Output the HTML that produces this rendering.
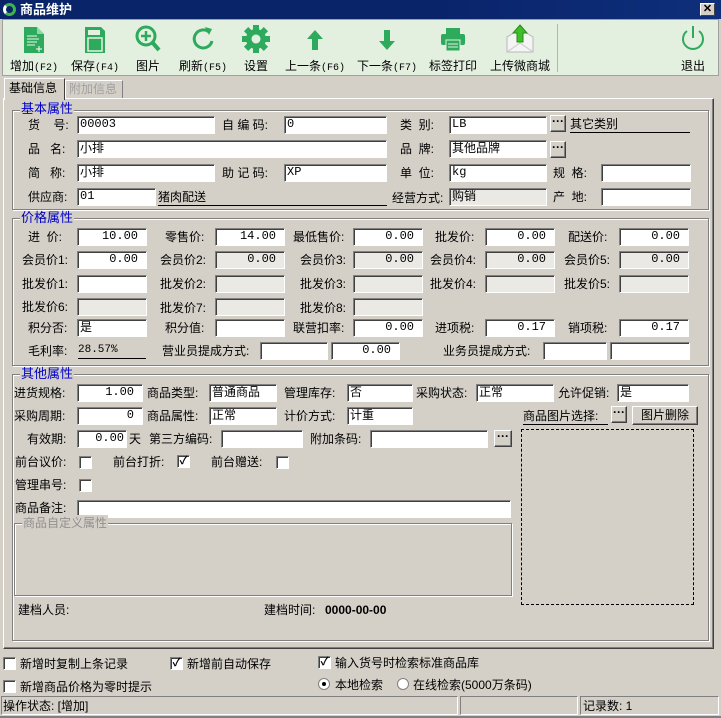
<!DOCTYPE html>
<html><head><meta charset="utf-8">
<style>
*{box-sizing:border-box;margin:0;padding:0}
body{width:721px;height:718px;background:#d4d0c8;font:12px "Liberation Sans","Noto Sans CJK SC",sans-serif;color:#000;position:relative;overflow:hidden}
div,span{position:absolute}
.l{white-space:nowrap;line-height:16px;font-size:12px}
.i{height:18px;background:#fff;border:1px solid;border-color:#808080 #fff #fff #808080;box-shadow:inset 1px 1px #404040;line-height:15px;padding-left:2px;white-space:nowrap;font-size:12px;overflow:hidden}
.g{background:#ebe9e4}
.r{text-align:right;padding-right:8px;font-family:"Liberation Mono",monospace;font-size:12px}
.m{font-family:"Liberation Mono",monospace}
.b{height:17px;width:16px;background:#d4d0c8;border:1px solid;border-color:#fff #404040 #404040 #fff;box-shadow:inset -1px -1px #808080;text-align:center;line-height:11px;font-weight:bold;font-size:12px}
.fr{border:1px solid #808080;box-shadow:1px 1px #fff, inset 1px 1px #fff}
.gt{color:#0000c8;background:#d4d0c8;padding:0 1px;line-height:14px;font-size:13px}
.cb{width:13px;height:13px;background:#fff;border:1px solid;border-color:#808080 #fff #fff #808080;box-shadow:inset 1px 1px #404040;font-size:11px;line-height:10px;text-align:center;font-weight:bold}
.tb{top:23px;text-align:center;font-size:12px;white-space:nowrap}
.tb svg{display:block;margin:0 auto}
.ul{border-bottom:1px solid #000}
</style></head><body>
<div style="left:0;top:0;width:721px;height:19px;background:linear-gradient(90deg,#0a246a,#0a246a 60%,#0e2f7c)"></div>
<div style="left:3px;top:3px;width:13px;height:13px;border-radius:50%;border:3px solid #3bb54a;border-left-color:#fff"></div>
<div class="l" style="left:20px;top:2px;color:#fff;font-weight:bold;font-size:13px">商品维护</div>
<div style="left:700px;top:3px;width:15px;height:13px;background:#d4d0c8;border:1px solid;border-color:#fff #404040 #404040 #fff;font-size:11px;line-height:10px;text-align:center;font-weight:bold">✕</div>
<div style="left:2px;top:19px;width:717px;height:57px;background:#e3f0e0;border:1px solid #a0a0a0"></div>
<div style="left:557px;top:24px;width:1px;height:48px;background:#b0b8b0"></div>
<div class="tb" style="left:8px;width:52px"><svg width="24" height="32" viewBox="0 0 24 32"><path d="M2 4h13l7 7v19H2z" fill="#2eaa5c"/><path d="M15 4v7h7" fill="#8fd6a6"/><path d="M5 13h10M5 16h12M5 19h10M5 22h8" stroke="#e8f8ec" stroke-width="1"/><path d="M14 26h6M17 23v6" stroke="#fff" stroke-width="1"/></svg><span style="position:static;display:block;margin-top:2px">增加<span class="m" style="position:static;font-size:10px">(F2)</span></span></div>
<div class="tb" style="left:66px;width:58px"><svg width="24" height="32" viewBox="0 0 24 32"><path d="M2 4h16l4 4v22H2z" fill="#2eaa5c"/><rect x="5" y="7" width="12" height="5" fill="#e3f0e0"/><rect x="5" y="15" width="14" height="13" fill="none" stroke="#e3f0e0" stroke-width="1.5"/></svg><span style="position:static;display:block;margin-top:2px">保存<span class="m" style="position:static;font-size:10px">(F4)</span></span></div>
<div class="tb" style="left:130px;width:36px"><svg width="28" height="32" viewBox="0 0 28 32"><circle cx="12" cy="13" r="9" fill="none" stroke="#2eaa5c" stroke-width="3"/><path d="M12 8v10M7 13h10" stroke="#2eaa5c" stroke-width="2.5"/><path d="M18 19l7 8" stroke="#2eaa5c" stroke-width="4"/></svg><span style="position:static;display:block;margin-top:2px">图片</span></div>
<div class="tb" style="left:176px;width:54px"><svg width="26" height="32" viewBox="0 0 26 32"><path d="M19 9A9 9 0 1 0 22 18" fill="none" stroke="#2eaa5c" stroke-width="3"/><path d="M15 4l7 2-3 6z" fill="#2eaa5c"/></svg><span style="position:static;display:block;margin-top:2px">刷新<span class="m" style="position:static;font-size:10px">(F5)</span></span></div>
<div class="tb" style="left:238px;width:36px"><svg width="28" height="32" viewBox="0 0 28 32"><g transform="translate(14,16)"><circle r="10" fill="#2eaa5c"/><g fill="#2eaa5c"><rect x="-3" y="-14" width="6" height="28"/><rect x="-3" y="-14" width="6" height="28" transform="rotate(45)"/><rect x="-3" y="-14" width="6" height="28" transform="rotate(90)"/><rect x="-3" y="-14" width="6" height="28" transform="rotate(135)"/></g><circle r="4.5" fill="#e3f0e0"/></g></svg><span style="position:static;display:block;margin-top:2px">设置</span></div>
<div class="tb" style="left:284px;width:62px"><svg width="20" height="32" viewBox="0 0 20 32"><path d="M10 7l8 9h-5v11H7V16H2z" fill="#2eaa5c"/></svg><span style="position:static;display:block;margin-top:2px">上一条<span class="m" style="position:static;font-size:10px">(F6)</span></span></div>
<div class="tb" style="left:356px;width:62px"><svg width="20" height="32" viewBox="0 0 20 32"><path d="M10 27l8-9h-5V7H7v11H2z" fill="#2eaa5c"/></svg><span style="position:static;display:block;margin-top:2px">下一条<span class="m" style="position:static;font-size:10px">(F7)</span></span></div>
<div class="tb" style="left:426px;width:54px"><svg width="28" height="32" viewBox="0 0 28 32"><rect x="7" y="5" width="14" height="6" fill="#2eaa5c"/><rect x="2" y="11" width="24" height="11" rx="2" fill="#2eaa5c"/><rect x="7" y="17" width="14" height="11" fill="#2eaa5c" stroke="#e3f0e0"/><path d="M9 21h10M9 24h10" stroke="#e3f0e0"/></svg><span style="position:static;display:block;margin-top:2px">标签打印</span></div>
<div class="tb" style="left:488px;width:64px"><svg width="30" height="32" viewBox="0 0 30 32"><path d="M2 14l13-8 13 8v15H2z" fill="#f4f4f4" stroke="#b8b8b8"/><path d="M2 29l13-9 13 9" fill="none" stroke="#c8c8c8"/><path d="M15 2l7 8h-4v9h-6v-9H8z" fill="#3cbf28" stroke="#2a8a18"/></svg><span style="position:static;display:block;margin-top:2px">上传微商城</span></div>
<div class="tb" style="left:676px;width:34px"><svg width="28" height="32" viewBox="0 0 28 32"><path d="M8 8A10 10 0 1 0 20 8" fill="none" stroke="#2eaa5c" stroke-width="2"/><path d="M14 3v12" stroke="#2eaa5c" stroke-width="2"/></svg><span style="position:static;display:block;margin-top:2px">退出</span></div>
<div style="left:4px;top:78px;width:61px;height:22px;background:#d4d0c8;border:1px solid;border-color:#fff #404040 transparent #fff;border-bottom:none;z-index:2"></div>
<div class="l" style="left:9px;top:80px;z-index:3">基础信息</div>
<div style="left:65px;top:80px;width:58px;height:19px;border:1px solid;border-color:#fff #808080 transparent #fff"></div>
<div class="l" style="left:69px;top:81px;color:#a0a0a0">附加信息</div>
<div style="left:3px;top:98px;width:711px;height:551px;border:1px solid;border-color:#fff #404040 #404040 #fff;box-shadow:inset -1px -1px #808080"></div>

<div class="fr" style="left:12px;top:110px;width:697px;height:100px"></div>
<div class="l gt" style="left:20px;top:102px">基本属性</div>
<div class="l" style="left:28px;top:117px">货&nbsp;&nbsp;&nbsp;&nbsp;号:</div>
<div class="i m" style="left:77px;top:116px;width:138px">00003</div>
<div class="l" style="left:222px;top:117px">自 编 码:</div>
<div class="i m" style="left:284px;top:116px;width:103px">0</div>
<div class="l" style="left:400px;top:117px">类&nbsp;&nbsp;别:</div>
<div class="i m" style="left:449px;top:116px;width:98px">LB</div>
<div class="b" style="left:550px;top:115px">···</div>
<div class="l ul" style="left:570px;top:116px;width:120px">其它类别</div>

<div class="l" style="left:28px;top:141px">品&nbsp;&nbsp;&nbsp;名:</div>
<div class="i" style="left:77px;top:140px;width:310px">小排</div>
<div class="l" style="left:400px;top:141px">品&nbsp;&nbsp;牌:</div>
<div class="i" style="left:449px;top:140px;width:98px">其他品牌</div>
<div class="b" style="left:550px;top:141px">···</div>

<div class="l" style="left:28px;top:165px">简&nbsp;&nbsp;&nbsp;称:</div>
<div class="i" style="left:77px;top:164px;width:138px">小排</div>
<div class="l" style="left:222px;top:165px">助 记 码:</div>
<div class="i m" style="left:284px;top:164px;width:103px">XP</div>
<div class="l" style="left:400px;top:165px">单&nbsp;&nbsp;位:</div>
<div class="i m" style="left:449px;top:164px;width:98px">kg</div>
<div class="l" style="left:553px;top:165px">规&nbsp;&nbsp;格:</div>
<div class="i" style="left:601px;top:164px;width:90px"></div>

<div class="l" style="left:28px;top:189px">供应商:</div>
<div class="i m" style="left:77px;top:188px;width:79px">01</div>
<div class="l ul" style="left:158px;top:189px;width:229px">猪肉配送</div>
<div class="l" style="left:392px;top:190px">经营方式:</div>
<div class="i g" style="left:449px;top:188px;width:98px">购销</div>
<div class="l" style="left:553px;top:189px">产&nbsp;&nbsp;地:</div>
<div class="i" style="left:601px;top:188px;width:90px"></div>

<div class="fr" style="left:12px;top:218px;width:697px;height:148px"></div>
<div class="l gt" style="left:20px;top:211px">价格属性</div>
<div class="l" style="left:28px;top:229px">进&nbsp;&nbsp;价:</div><div class="i r" style="left:77px;top:228px;width:70px">10.00</div>
<div class="l" style="left:165px;top:229px">零售价:</div><div class="i r" style="left:215px;top:228px;width:70px">14.00</div>
<div class="l" style="left:293px;top:229px">最低售价:</div><div class="i r" style="left:353px;top:228px;width:70px">0.00</div>
<div class="l" style="left:435px;top:229px">批发价:</div><div class="i r" style="left:485px;top:228px;width:70px">0.00</div>
<div class="l" style="left:568px;top:229px">配送价:</div><div class="i r" style="left:619px;top:228px;width:70px">0.00</div>

<div class="l" style="left:22px;top:252px">会员价1:</div><div class="i r" style="left:77px;top:251px;width:70px">0.00</div>
<div class="l" style="left:160px;top:252px">会员价2:</div><div class="i g r" style="left:215px;top:251px;width:70px">0.00</div>
<div class="l" style="left:300px;top:252px">会员价3:</div><div class="i g r" style="left:353px;top:251px;width:70px">0.00</div>
<div class="l" style="left:430px;top:252px">会员价4:</div><div class="i g r" style="left:485px;top:251px;width:70px">0.00</div>
<div class="l" style="left:564px;top:252px">会员价5:</div><div class="i g r" style="left:619px;top:251px;width:70px">0.00</div>

<div class="l" style="left:22px;top:276px">批发价1:</div><div class="i" style="left:77px;top:275px;width:70px"></div>
<div class="l" style="left:160px;top:276px">批发价2:</div><div class="i g" style="left:215px;top:275px;width:70px"></div>
<div class="l" style="left:300px;top:276px">批发价3:</div><div class="i g" style="left:353px;top:275px;width:70px"></div>
<div class="l" style="left:430px;top:276px">批发价4:</div><div class="i g" style="left:485px;top:275px;width:70px"></div>
<div class="l" style="left:564px;top:276px">批发价5:</div><div class="i g" style="left:619px;top:275px;width:70px"></div>

<div class="l" style="left:22px;top:299px">批发价6:</div><div class="i g" style="left:77px;top:298px;width:70px"></div>
<div class="l" style="left:160px;top:300px">批发价7:</div><div class="i g" style="left:215px;top:298px;width:70px"></div>
<div class="l" style="left:300px;top:300px">批发价8:</div><div class="i g" style="left:353px;top:298px;width:70px"></div>

<div class="l" style="left:28px;top:320px">积分否:</div><div class="i" style="left:77px;top:319px;width:70px">是</div>
<div class="l" style="left:165px;top:320px">积分值:</div><div class="i" style="left:215px;top:319px;width:70px"></div>
<div class="l" style="left:293px;top:320px">联营扣率:</div><div class="i r" style="left:353px;top:319px;width:70px">0.00</div>
<div class="l" style="left:435px;top:320px">进项税:</div><div class="i r" style="left:485px;top:319px;width:70px">0.17</div>
<div class="l" style="left:568px;top:320px">销项税:</div><div class="i r" style="left:619px;top:319px;width:70px">0.17</div>

<div class="l" style="left:28px;top:343px">毛利率:</div>
<div class="l m ul" style="left:78px;top:342px;width:68px;font-size:11px">28.57%</div>
<div class="l" style="left:162px;top:343px">营业员提成方式:</div>
<div class="i" style="left:260px;top:342px;width:68px"></div>
<div class="i r" style="left:331px;top:342px;width:69px">0.00</div>
<div class="l" style="left:443px;top:343px">业务员提成方式:</div>
<div class="i" style="left:543px;top:342px;width:64px"></div>
<div class="i" style="left:610px;top:342px;width:80px"></div>

<div class="fr" style="left:12px;top:374px;width:697px;height:267px"></div>
<div class="l gt" style="left:20px;top:367px">其他属性</div>
<div class="l" style="left:14px;top:385px">进货规格:</div><div class="i r" style="left:77px;top:384px;width:66px">1.00</div>
<div class="l" style="left:147px;top:385px">商品类型:</div><div class="i" style="left:209px;top:384px;width:68px">普通商品</div>
<div class="l" style="left:284px;top:385px">管理库存:</div><div class="i" style="left:347px;top:384px;width:66px">否</div>
<div class="l" style="left:416px;top:385px">采购状态:</div><div class="i" style="left:476px;top:384px;width:78px">正常</div>
<div class="l" style="left:558px;top:385px">允许促销:</div><div class="i" style="left:617px;top:384px;width:72px">是</div>

<div class="l" style="left:14px;top:408px">采购周期:</div><div class="i r" style="left:77px;top:407px;width:66px">0</div>
<div class="l" style="left:147px;top:408px">商品属性:</div><div class="i" style="left:209px;top:407px;width:68px">正常</div>
<div class="l" style="left:284px;top:408px">计价方式:</div><div class="i" style="left:347px;top:407px;width:66px">计重</div>
<div class="l ul" style="left:523px;top:408px;width:85px">商品图片选择:</div>
<div class="b" style="left:611px;top:406px">···</div>
<div style="left:632px;top:406px;width:66px;height:19px;background:#d4d0c8;border:1px solid;border-color:#fff #404040 #404040 #fff;box-shadow:inset -1px -1px #808080;text-align:center;line-height:16px">图片删除</div>

<div class="l" style="left:27px;top:431px">有效期:</div><div class="i r" style="left:77px;top:430px;width:50px;padding-right:2px">0.00</div>
<div class="l" style="left:129px;top:431px">天</div>
<div class="l" style="left:149px;top:431px">第三方编码:</div><div class="i" style="left:221px;top:430px;width:82px"></div>
<div class="l" style="left:310px;top:431px">附加条码:</div><div class="i" style="left:370px;top:430px;width:118px"></div>
<div class="b" style="left:494px;top:430px;width:18px">···</div>
<div style="left:521px;top:429px;width:173px;height:176px;border:1px dashed #000"></div>

<div class="l" style="left:15px;top:454px">前台议价:</div><div class="cb" style="left:79px;top:456px"></div>
<div class="l" style="left:113px;top:454px">前台打折:</div><div class="cb" style="left:177px;top:455px">✓</div>
<div class="l" style="left:211px;top:454px">前台赠送:</div><div class="cb" style="left:276px;top:456px"></div>
<div class="l" style="left:15px;top:477px">管理串号:</div><div class="cb" style="left:79px;top:479px"></div>
<div class="l" style="left:15px;top:500px">商品备注:</div><div class="i" style="left:77px;top:500px;width:434px"></div>

<div class="fr" style="left:14px;top:523px;width:498px;height:73px"></div>
<div class="l" style="left:22px;top:515px;color:#909090;background:#d4d0c8;padding:0 1px">商品自定义属性</div>
<div class="l" style="left:18px;top:602px">建档人员:</div>
<div class="l" style="left:264px;top:602px">建档时间:</div>
<div class="l" style="left:325px;top:602px;font-weight:bold;font-family:'Liberation Sans',sans-serif">0000-00-00</div>

<div class="cb" style="left:3px;top:657px"></div><div class="l" style="left:20px;top:656px">新增时复制上条记录</div>
<div class="cb" style="left:170px;top:657px">✓</div><div class="l" style="left:187px;top:656px">新增前自动保存</div>
<div class="cb" style="left:318px;top:656px">✓</div><div class="l" style="left:335px;top:655px">输入货号时检索标准商品库</div>
<div class="cb" style="left:3px;top:680px"></div><div class="l" style="left:20px;top:679px">新增商品价格为零时提示</div>
<div style="left:318px;top:678px;width:12px;height:12px;border-radius:50%;background:#fff;border:1px solid #808080"></div><div style="left:322px;top:682px;width:4px;height:4px;border-radius:50%;background:#000"></div>
<div class="l" style="left:335px;top:677px">本地检索</div>
<div style="left:397px;top:678px;width:12px;height:12px;border-radius:50%;background:#fff;border:1px solid #808080"></div>
<div class="l" style="left:413px;top:677px">在线检索(5000万条码)</div>

<div style="left:1px;top:696px;width:457px;height:19px;border:1px solid;border-color:#808080 #fff #fff #808080"></div>
<div class="l" style="left:3px;top:698px">操作状态: [增加]</div>
<div style="left:460px;top:696px;width:118px;height:19px;border:1px solid;border-color:#808080 #fff #fff #808080"></div>
<div style="left:580px;top:696px;width:139px;height:19px;border:1px solid;border-color:#808080 #fff #fff #808080"></div>
<div class="l" style="left:583px;top:698px">记录数: 1</div>
<div style="left:0;top:716px;width:721px;height:2px;background:#808080"></div>
</body></html>
